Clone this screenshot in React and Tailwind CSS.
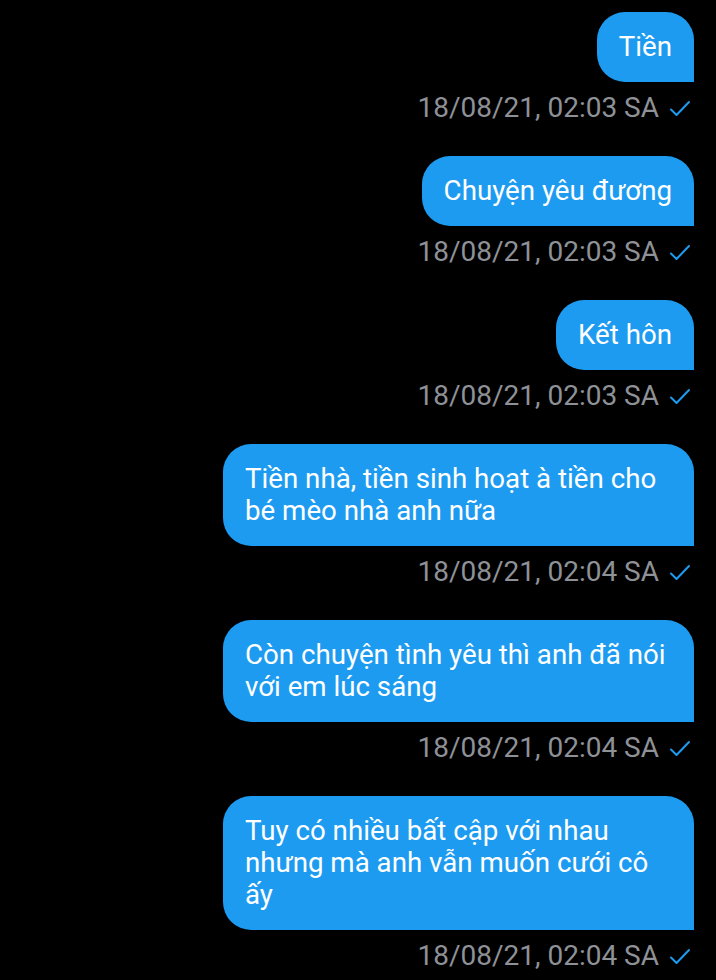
const messages = [
  { text: 'Tiền', time: '18/08/21, 02:03 SA' },
  { text: 'Chuyện yêu đương', time: '18/08/21, 02:03 SA' },
  { text: 'Kết hôn', time: '18/08/21, 02:03 SA' },
  { text: 'Tiền nhà, tiền sinh hoạt à tiền cho bé mèo nhà anh nữa', time: '18/08/21, 02:04 SA' },
  { text: 'Còn chuyện tình yêu thì anh đã nói với em lúc sáng', time: '18/08/21, 02:04 SA' },
  { text: 'Tuy có nhiều bất cập với nhau nhưng mà anh vẫn muốn cưới cô ấy', time: '18/08/21, 02:04 SA' },
]

function Check() {
  return (
    <svg width="22" height="18" viewBox="0 0 22 18" fill="none" className="ml-[10px] mr-[3px] mt-[2px]">
      <path d="M2 9.5 L7.5 15 L20 2" stroke="#1d9bf0" strokeWidth="2" strokeLinecap="round" strokeLinejoin="round" />
    </svg>
  )
}

export default function App() {
  return (
    <div className="min-h-[980px] bg-black pt-3 pr-[22px] font-['Roboto',sans-serif] flex flex-col items-end">
      {messages.map((m, i) => (
        <div key={i} className="flex flex-col items-end mb-[32px]">
          <div className="max-w-[471px] bg-[#1d9bf0] text-white text-[27.7px] leading-[32px] px-[22px] py-[19px] rounded-t-[28px] rounded-bl-[28px] rounded-br-none">
            {m.text}
          </div>
          <div className="flex items-center mt-[10px] text-[28px] leading-[32px] text-[#8e9196]">
            {m.time}
            <Check />
          </div>
        </div>
      ))}
    </div>
  )
}
